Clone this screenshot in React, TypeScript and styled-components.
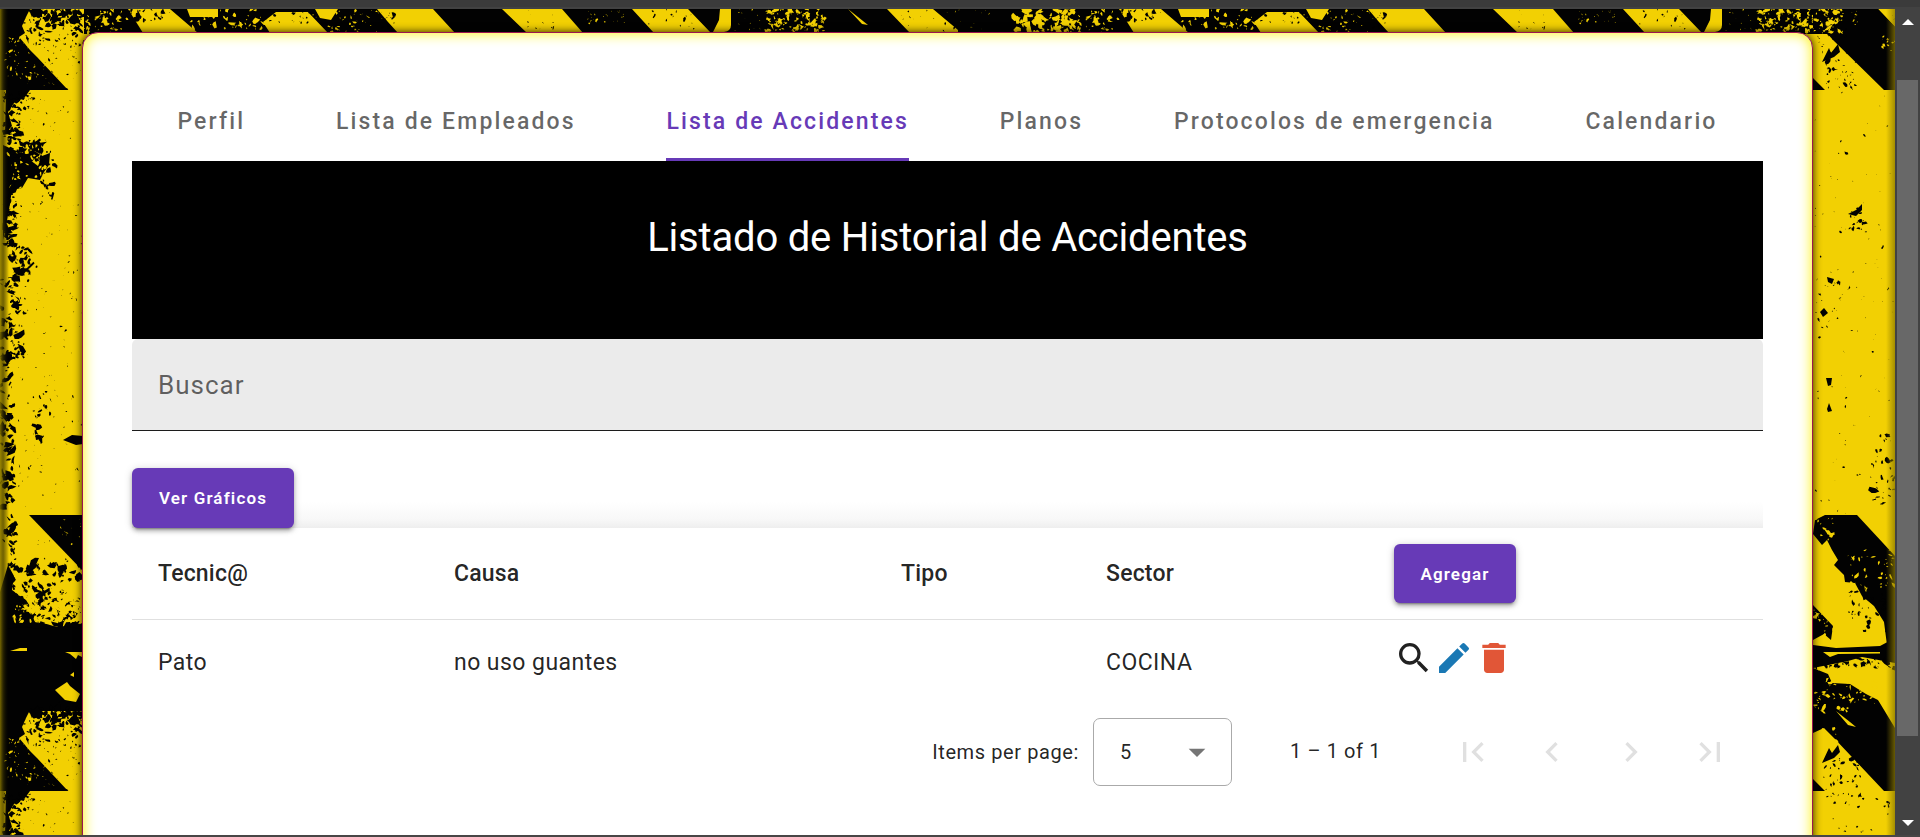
import React from "react";
import styled, { createGlobalStyle } from "styled-components";
import {
  MdArrowDropDown,
  MdChevronLeft,
  MdChevronRight,
  MdDelete,
  MdEdit,
  MdFirstPage,
  MdLastPage,
  MdSearch,
} from "react-icons/md";

const YELLOW = "#f2d003";
const BLACK = "#020202";
const PURPLE = "#673ab7";

const GlobalStyle = createGlobalStyle`
  * { box-sizing: border-box; }
  html, body { margin: 0; padding: 0; overflow: hidden; }
  body { font-family: Roboto, "Liberation Sans", sans-serif; color: rgba(0, 0, 0, 0.87); }
`;

/* ---------- hazard-tape wallpaper ---------- */

type Patch = {
  x: number;
  y: number;
  w: number;
  h: number;
  n: number;
  s: number;
  dark: boolean;
};

function makeRandom(seed: number) {
  let a = seed;
  return () => {
    a = (a + 0x6d2b79f5) | 0;
    let t = Math.imul(a ^ (a >>> 15), 1 | a);
    t = (t + Math.imul(t ^ (t >>> 7), 61 | t)) ^ t;
    return ((t ^ (t >>> 14)) >>> 0) / 4294967296;
  };
}

/* Jagged paint chips scattered over a rectangular patch. */
function chips(p: Patch, seed: number) {
  const rnd = makeRandom(seed);
  let d = "";
  for (let i = 0; i < p.n; i++) {
    const cx = p.x + rnd() * p.w;
    const cy = p.y + rnd() * p.h;
    const r = p.s * (0.3 + rnd() * rnd() * 1.5);
    const stretch = 0.3 + rnd() * 0.5;
    const turn = rnd() * Math.PI;
    const k = 7;
    for (let j = 0; j < k; j++) {
      const a = (j / k) * Math.PI * 2;
      const q = r * (0.4 + rnd());
      const ux = Math.cos(a) * q;
      const uy = Math.sin(a) * q * stretch;
      const px = cx + ux * Math.cos(turn) - uy * Math.sin(turn);
      const py = cy + ux * Math.sin(turn) + uy * Math.cos(turn);
      d += `${j ? "L" : "M"}${px.toFixed(1)} ${py.toFixed(1)}`;
    }
    d += "Z";
  }
  return d;
}

const stripPatches: Patch[] = [
  { x: 82, y: 9, w: 46, h: 24, n: 45, s: 3, dark: false },
  { x: 126, y: 9, w: 50, h: 14, n: 26, s: 2.4, dark: true },
  { x: 185, y: 9, w: 85, h: 20, n: 50, s: 2.6, dark: false },
  { x: 262, y: 9, w: 50, h: 14, n: 18, s: 2.4, dark: true },
  { x: 312, y: 9, w: 72, h: 24, n: 60, s: 1.4, dark: false },
  { x: 378, y: 12, w: 16, h: 20, n: 16, s: 1.8, dark: true },
  { x: 510, y: 9, w: 58, h: 20, n: 12, s: 1.3, dark: true },
  { x: 585, y: 10, w: 40, h: 14, n: 26, s: 1.2, dark: false },
  { x: 645, y: 9, w: 50, h: 20, n: 16, s: 2, dark: true },
  { x: 734, y: 9, w: 26, h: 22, n: 14, s: 1, dark: false },
  { x: 762, y: 9, w: 62, h: 24, n: 95, s: 3, dark: false },
  { x: 775, y: 9, w: 50, h: 24, n: 50, s: 1.8, dark: true },
  { x: 900, y: 9, w: 55, h: 22, n: 20, s: 1.4, dark: true },
  { x: 940, y: 9, w: 50, h: 24, n: 14, s: 0.9, dark: false },
];

const stripBands = [
  "M128 9H170L198 33H143Z",
  "M187 9H218V17H190Z",
  "M263 22L276 12L308 12L328 33H270Z",
  "M315 9H338L331 20L320 18Z",
  "M377 9H433L455 33H398L388 22Z",
  "M502 9H562L583 33H527Z",
  "M632 9H688L711 33H654Z",
  "M720 9H731V25Q731 31 724 32H713L719 20Z",
  "M887 9H933L958 30V33H910Z",
  "M848 9L868 25L862 24Z",
].join("");

const HazardStrip = ({ offset }: { offset: number }) => (
  <g transform={`translate(${offset} 0)`}>
    <rect x={offset ? 0 : 84} y="9" width="991" height="25" fill={BLACK} />
    <path d={stripBands} fill={YELLOW} />
    {stripPatches.map((p, i) => (
      <path key={i} d={chips(p, i + 31)} fill={p.dark ? BLACK : YELLOW} />
    ))}
    {offset > 0 && (
      <path
        d={chips({ x: 22, y: 9, w: 62, h: 25, n: 100, s: 3.8, dark: false }, 8)}
        fill={YELLOW}
      />
    )}
  </g>
);

const leftTopPatches: Patch[] = [
  { x: 24, y: 12, w: 60, h: 34, n: 80, s: 2.8, dark: true },
  { x: 30, y: 6, w: 54, h: 11, n: 46, s: 4.4, dark: true },
  { x: 52, y: 10, w: 32, h: 16, n: 34, s: 4, dark: true },
  { x: 5, y: 38, w: 26, h: 40, n: 36, s: 2, dark: false },
  { x: 20, y: 60, w: 34, h: 26, n: 24, s: 1.1, dark: false },
  { x: 44, y: 46, w: 38, h: 44, n: 38, s: 1.2, dark: true },
  { x: 4, y: 92, w: 16, h: 52, n: 60, s: 4, dark: true },
  { x: 18, y: 92, w: 16, h: 18, n: 16, s: 2.4, dark: true },
  { x: 22, y: 96, w: 58, h: 48, n: 28, s: 1, dark: true },
];

const LeftTop = ({ dy }: { dy: number }) => (
  <g transform={`translate(0 ${dy})`}>
    <path
      d="M0 9H30L26 17L22 26L25 33L19 37L25 44L30 50L37 57L68 90H0Z"
      fill={BLACK}
    />
    <path d="M6 90H30L25 97L14 103L8 112L12 126L5 134Z" fill={BLACK} />
    {leftTopPatches.map((p, i) => (
      <path key={i} d={chips(p, i + 100)} fill={p.dark ? BLACK : YELLOW} />
    ))}
  </g>
);

const leftPatches: Patch[] = [
  { x: 6, y: 142, w: 40, h: 18, n: 44, s: 4, dark: true },
  { x: 8, y: 145, w: 44, h: 45, n: 50, s: 2.2, dark: false },
  { x: 40, y: 150, w: 14, h: 54, n: 26, s: 3, dark: true },
  { x: 4, y: 180, w: 12, h: 66, n: 60, s: 3.6, dark: true },
  { x: 8, y: 245, w: 24, h: 36, n: 46, s: 4.2, dark: true },
  { x: 0, y: 280, w: 24, h: 80, n: 80, s: 4, dark: true },
  { x: 0, y: 360, w: 14, h: 60, n: 26, s: 4, dark: true },
  { x: 0, y: 416, w: 14, h: 100, n: 50, s: 5, dark: true },
  { x: 28, y: 380, w: 24, h: 62, n: 16, s: 2.8, dark: true },
  { x: 18, y: 200, w: 65, h: 310, n: 135, s: 1.1, dark: true },
  { x: 4, y: 516, w: 12, h: 50, n: 30, s: 4, dark: true },
  { x: 30, y: 530, w: 40, h: 40, n: 14, s: 1.2, dark: true },
  { x: 12, y: 562, w: 71, h: 66, n: 130, s: 4.4, dark: true },
  { x: 14, y: 588, w: 69, h: 34, n: 150, s: 3, dark: false },
  { x: 60, y: 518, w: 22, h: 28, n: 12, s: 1, dark: false },
];

const rightPatches: Patch[] = [
  { x: 1813, y: 9, w: 30, h: 24, n: 60, s: 2.6, dark: false },
  { x: 1813, y: 28, w: 34, h: 26, n: 22, s: 2, dark: true },
  { x: 1826, y: 60, w: 32, h: 30, n: 34, s: 2, dark: true },
  { x: 1846, y: 9, w: 12, h: 16, n: 7, s: 1.4, dark: false },
  { x: 1882, y: 36, w: 13, h: 16, n: 12, s: 1.6, dark: false },
  { x: 1814, y: 92, w: 80, h: 430, n: 110, s: 1.2, dark: true },
  { x: 1820, y: 275, w: 24, h: 60, n: 14, s: 2, dark: true },
  { x: 1850, y: 204, w: 16, h: 28, n: 18, s: 2, dark: true },
  { x: 1872, y: 430, w: 23, h: 76, n: 28, s: 3.4, dark: true },
  { x: 1814, y: 518, w: 20, h: 28, n: 16, s: 3, dark: false },
  { x: 1848, y: 550, w: 46, h: 40, n: 44, s: 2.4, dark: false },
  { x: 1848, y: 588, w: 38, h: 44, n: 40, s: 2.6, dark: true },
  { x: 1814, y: 610, w: 24, h: 30, n: 22, s: 2.2, dark: false },
  { x: 1813, y: 658, w: 82, h: 10, n: 44, s: 3, dark: true },
  { x: 1814, y: 668, w: 34, h: 44, n: 46, s: 2.5, dark: false },
  { x: 1846, y: 680, w: 36, h: 24, n: 34, s: 2.2, dark: false },
  { x: 1816, y: 728, w: 20, h: 16, n: 12, s: 2.4, dark: false },
  { x: 1822, y: 758, w: 38, h: 40, n: 40, s: 2, dark: true },
  { x: 1830, y: 795, w: 60, h: 38, n: 20, s: 1.5, dark: true },
];

const Backdrop = styled.svg`
  position: absolute;
  left: 0;
  top: 0;
`;

const HazardBackdrop = () => (
  <Backdrop width="1895" height="826" viewBox="0 9 1895 826">
    <defs>
      <linearGradient id="edgeLeft" x1="0" x2="1" y1="0" y2="0">
        <stop offset="0" stopColor="#8a7800" stopOpacity=".85" />
        <stop offset=".35" stopColor="#3a3300" stopOpacity=".7" />
        <stop offset="1" stopColor="#000" stopOpacity="0" />
      </linearGradient>
      <linearGradient id="edgeRight" x1="0" x2="1" y1="0" y2="0">
        <stop offset="0" stopColor="#8a7800" stopOpacity="0" />
        <stop offset="1" stopColor="#8a7800" stopOpacity=".75" />
      </linearGradient>
    </defs>
    <rect y="9" width="1895" height="826" fill={YELLOW} />

    <path
      d="M3 145L14 150L26 154L30 160L38 166L42 156L50 153L49 165L44 172L40 180L28 178L22 188L12 190L9 210L3 240Z"
      fill={BLACK}
    />
    <path d="M63 440L72 435L83 436V444L76 445Z" fill={BLACK} />
    <path d="M29 515H83V571Z" fill={BLACK} />
    <path
      d="M8 565L14 576L12 590L26 600L40 622L60 628L83 619V651H0V592Z"
      fill={BLACK}
    />
    {leftPatches.map((p, i) => (
      <path key={i} d={chips(p, i + 200)} fill={p.dark ? BLACK : YELLOW} />
    ))}
    <path d="M0 630L20 627L46 629L60 626L83 629V711H0Z" fill={BLACK} />
    <path
      d="M10 651L20 648H27V651ZM65 652H82V657L78 655L76 659L70 654ZM55 690L67 682L70 686L80 694L76 702L65 700ZM70 675L74 672V677Z"
      fill={YELLOW}
    />
    <LeftTop dy={0} />
    <LeftTop dy={701} />

    <HazardStrip offset={0} />
    <HazardStrip offset={991} />

    <path
      d="M1813 9H1878L1895 27V90H1884L1833 40L1826 32L1813 28Z"
      fill={BLACK}
    />
    <path
      d="M1822 62L1829 48L1831 53L1838 44L1840 52L1834 57ZM1813 78L1825 90H1813Z"
      fill={BLACK}
    />
    <path
      d="M1848 214L1856 210L1862 204V210L1856 216ZM1827 277L1834 279L1832 284L1828 282ZM1820 312L1824 308L1828 313L1823 317ZM1826 378H1832L1831 385L1828 386ZM1827 409L1829 403L1832 411L1828 412Z"
      fill={BLACK}
    />
    <path
      d="M1815 520L1825 515H1857L1895 556V645H1887L1884 622L1874 606L1862 596L1855 583L1845 582L1844 575L1834 565L1838 560L1832 550L1827 540L1822 545L1813 534Z"
      fill={BLACK}
    />
    <path
      d="M1813 605L1833 626L1831 640L1824 634L1813 640ZM1813 645L1836 648L1880 646L1895 638V663L1862 657L1848 661L1813 668Z"
      fill={BLACK}
    />
    <path
      d="M1813 668L1828 674L1832 683L1850 684L1866 694L1878 700L1895 728V791H1884L1834 738L1824 728L1813 733Z"
      fill={BLACK}
    />
    <path
      d="M1822 763L1829 748L1832 753L1838 745L1840 752L1834 758ZM1813 779L1825 791H1813Z"
      fill={BLACK}
    />
    {rightPatches.map((p, i) => (
      <path key={i} d={chips(p, i + 300)} fill={p.dark ? BLACK : YELLOW} />
    ))}
    <path
      d="M1823 652H1880V653.5L1838 654L1830 657ZM1836 711L1850 722L1856 727L1848 725Z"
      fill={YELLOW}
    />

    <rect y="9" width="9" height="826" fill="url(#edgeLeft)" />
    <rect x="1886" y="9" width="9" height="826" fill="url(#edgeRight)" />
  </Backdrop>
);

/* ---------- window frame ---------- */

const Window = styled.div`
  display: flex;
  flex-direction: column;
  width: 1920px;
  height: 837px;
  background: #424242;
  border-top: 7px solid #3b3b3b;
  border-bottom: 2px solid #484646;
  overflow: hidden;
`;

const Viewport = styled.div`
  display: flex;
  flex: 1;
  min-height: 0;
`;

const Page = styled.main`
  position: relative;
  width: 1895px;
  height: 826px;
  margin-top: 2px;
  padding: 23px 82px 0 82px;
  overflow: hidden;
`;

const ScrollTrack = styled.div`
  display: flex;
  flex-direction: column;
  align-items: center;
  width: 25px;
  padding: 12px 2px 9px;
  background: #424242;
`;

const ScrollThumb = styled.div`
  width: 21px;
  height: 656px;
  margin: 55px 0 auto;
  background: #686868;
`;

const Card = styled.section`
  position: relative;
  height: 900px;
  padding: 48px 49px 0 49px;
  background: #fff;
  border: 1px solid #9c1450;
  border-radius: 16px;
  box-shadow: inset 0 0 14px #fff200, 0 0 9px rgba(0, 0, 0, 0.85);
`;

/* ---------- content ---------- */

const Tabs = styled.nav`
  display: flex;
  height: 80px;
`;

const Tab = styled.div<{ $active?: boolean }>`
  display: flex;
  flex: 1 1 auto;
  justify-content: center;
  font-size: 23px;
  font-weight: 500;
  letter-spacing: 2.13px;
  line-height: 81px;
  white-space: nowrap;
  color: ${(p) => (p.$active ? PURPLE : "rgba(0, 0, 0, 0.6)")};

  span {
    height: 80px;
    border-bottom: 3px solid ${(p) => (p.$active ? PURPLE : "transparent")};
  }
`;

const Banner = styled.header`
  height: 178px;
  padding-top: 53px;
  background: #000;
  color: #fff;
  text-align: center;

  h1 {
    margin: 0;
    font-size: 40px;
    font-weight: 400;
    line-height: 48px;
    letter-spacing: -0.19px;
  }
`;

const SearchField = styled.div`
  height: 92px;
  padding: 0 26px;
  background: #ebebeb;
  border-bottom: 1px solid #1c1c1c;
  border-radius: 6px 6px 0 0;
  font-size: 26px;
  line-height: 92px;
  letter-spacing: 1px;
  color: rgba(0, 0, 0, 0.6);
`;

const Toolbar = styled.div`
  height: 97px;
  padding-top: 37px;
  background: linear-gradient(to top, #eee 0, #f8f8f8 9px, #fff 26px);
`;

const Button = styled.button<{ $width: number; $height: number }>`
  display: block;
  width: ${(p) => p.$width}px;
  height: ${(p) => p.$height}px;
  padding: 1px 0 0;
  border: 0;
  border-radius: 6px;
  background: ${PURPLE};
  color: #fff;
  font: 600 17px/1 Roboto, "Liberation Sans", sans-serif;
  letter-spacing: 1.15px;
  box-shadow: 0 4px 2px -3px rgba(0, 0, 0, 0.3), 0 3px 4px rgba(0, 0, 0, 0.25),
    0 1px 9px rgba(0, 0, 0, 0.16);
`;

const Row = styled.div<{ $head?: boolean }>`
  display: grid;
  grid-template-columns: 296px 447px 205px 288px 1fr;
  align-items: center;
  height: ${(p) => (p.$head ? 92 : 85)}px;
  padding-left: 26px;
  border-bottom: ${(p) => (p.$head ? "1px solid #e0e0e0" : "0")};
  font-size: 23px;
  font-weight: ${(p) => (p.$head ? 500 : 400)};
  letter-spacing: ${(p) => (p.$head ? 0.2 : 0.45)}px;
`;

const Actions = styled.div`
  display: flex;
  height: 40px;
  margin-bottom: 10px;
`;

const Paginator = styled.footer`
  display: flex;
  align-items: center;
  justify-content: flex-end;
  height: 94px;
  padding-right: 14px;
  font-size: 20px;
  letter-spacing: 0.6px;
`;

const PageSize = styled.div`
  display: flex;
  align-items: center;
  justify-content: space-between;
  width: 139px;
  height: 68px;
  margin: 0 58px 0 14px;
  padding: 0 14px 0 26px;
  border: 1px solid #aaa;
  border-radius: 7px;
`;

const RangeLabel = styled.span`
  width: 92px;
  margin: 0 51px 2px 0;
  white-space: nowrap;
`;

const PageButton = styled.span`
  display: flex;
  justify-content: center;
  width: 79px;
  color: #e0e0e0;
`;

const tabs = [
  "Perfil",
  "Lista de Empleados",
  "Lista de Accidentes",
  "Planos",
  "Protocolos de emergencia",
  "Calendario",
];

const pageIcons = [MdFirstPage, MdChevronLeft, MdChevronRight, MdLastPage];

export default function App() {
  return (
    <>
      <GlobalStyle />
      <Window>
        <Viewport>
          <Page>
            <HazardBackdrop />
            <Card>
              <Tabs>
                {tabs.map((t) => (
                  <Tab key={t} $active={t === "Lista de Accidentes"}>
                    <span>{t}</span>
                  </Tab>
                ))}
              </Tabs>
              <Banner>
                <h1>Listado de Historial de Accidentes</h1>
              </Banner>
              <SearchField>Buscar</SearchField>
              <Toolbar>
                <Button $width={162} $height={60}>
                  Ver Gráficos
                </Button>
              </Toolbar>
              <Row $head>
                <span>Tecnic@</span>
                <span>Causa</span>
                <span>Tipo</span>
                <span>Sector</span>
                <Button $width={122} $height={59}>
                  Agregar
                </Button>
              </Row>
              <Row>
                <span>Pato</span>
                <span>no uso guantes</span>
                <span />
                <span>COCINA</span>
                <Actions>
                  <MdSearch size={40} color="#212121" />
                  <MdEdit size={40} color="#1a78b4" />
                  <MdDelete size={40} color="#e15637" />
                </Actions>
              </Row>
              <Paginator>
                <span>Items per page:</span>
                <PageSize>
                  <span>5</span>
                  <MdArrowDropDown size={40} color="#757575" />
                </PageSize>
                <RangeLabel>1 – 1 of 1</RangeLabel>
                {pageIcons.map((Icon, i) => (
                  <PageButton key={i}>
                    <Icon size={40} />
                  </PageButton>
                ))}
              </Paginator>
            </Card>
          </Page>
          <ScrollTrack>
            <svg width="12" height="6" viewBox="0 0 12 6">
              <path d="M0 6L6 0L12 6Z" fill="#fff" />
            </svg>
            <ScrollThumb />
            <svg width="12" height="6" viewBox="0 0 12 6">
              <path d="M0 0L6 6L12 0Z" fill="#fff" />
            </svg>
          </ScrollTrack>
        </Viewport>
      </Window>
    </>
  );
}
